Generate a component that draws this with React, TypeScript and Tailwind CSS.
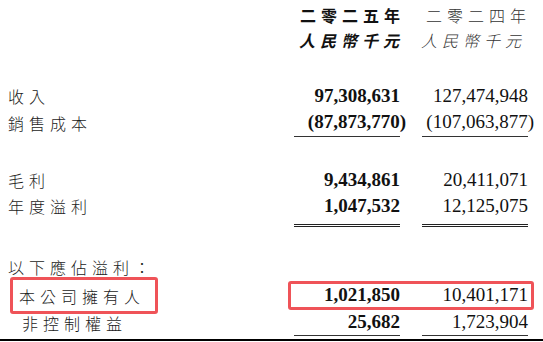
const cjk = "font-['Noto_Sans_CJK_TC','Noto_Sans_CJK_SC',sans-serif]"
const serif = "font-['Liberation_Serif','Times_New_Roman',serif]"

interface RowProps {
  label: string
  current: string
  prior: string
  indent?: string
  height?: string
  underline?: 'single' | 'double'
  highlight?: boolean
}

const Num = ({ value, bold }: { value: string; bold?: boolean }) => {
  const neg = value.startsWith('(')
  return (
    <span className={`${serif} text-[19px] text-[#111] whitespace-nowrap ${bold ? 'font-bold' : 'font-normal'} ${neg ? '-mr-[6px]' : ''}`}>
      {value}
    </span>
  )
}

const Row = ({ label, current, prior, indent = 'pl-[8px]', height = 'h-[26px]', underline, highlight }: RowProps) => {
  const line =
    underline === 'single'
      ? 'border-b border-[#333]'
      : underline === 'double'
        ? 'pb-[5px] border-b-[3px] border-double border-[#222]'
        : ''
  return (
    <div className="flex">
      <div className={`flex-1 flex items-center ${indent} ${height}`}>
        <span className={`relative ${cjk} text-[16px] font-light tracking-[5px] text-[#1a1a1a] whitespace-nowrap`}>
          {label}
          {highlight && (
            <span className="absolute -left-[9px] -right-[13px] -top-[7px] -bottom-[6px] rounded-[3px] border-[3px] border-[#ef5358]" />
          )}
        </span>
      </div>
      <div className="relative mr-[15px] flex w-[234px] gap-[22px]">
        <div className={`w-[106px] ${line}`}>
          <div className={`flex items-center justify-end ${height}`}>
            <Num value={current} bold />
          </div>
        </div>
        <div className={`w-[106px] ${line}`}>
          <div className={`flex items-center justify-end ${height}`}>
            <Num value={prior} />
          </div>
        </div>
        {highlight && (
          <div className="absolute -left-[6px] -right-[6px] top-0 bottom-0 rounded-[3px] border-[3px] border-[#ef5358]" />
        )}
      </div>
    </div>
  )
}

const Label = ({ text }: { text: string }) => (
  <div className="flex h-[26px] items-center pl-[8px]">
    <span className={`${cjk} text-[16px] font-light tracking-[5px] text-[#1a1a1a] whitespace-nowrap`}>{text}</span>
  </div>
)

export default function App() {
  return (
    <div className="w-[543px] h-[342px] overflow-hidden bg-white pt-[2px]">
      {/* Column headers */}
      <div className="flex">
        <div className="flex-1" />
        <div className={`mr-[15px] flex w-[234px] gap-[22px] ${cjk} text-[16px] tracking-[5px] whitespace-nowrap`}>
          <div className="w-[106px]">
            <div className="flex h-[25px] items-center justify-end">
              <span className="-mr-[5px] font-bold text-[#111]">二零二五年</span>
            </div>
            <div className="flex h-[25px] items-center justify-end">
              <span className="-mr-[4px] italic font-bold text-[#111]">人民幣千元</span>
            </div>
          </div>
          <div className="w-[106px]">
            <div className="flex h-[25px] items-center justify-end">
              <span className="-mr-[3px] font-light text-[#333]">二零二四年</span>
            </div>
            <div className="flex h-[25px] items-center justify-end">
              <span className="mr-[2px] italic font-light text-[#333]">人民幣千元</span>
            </div>
          </div>
        </div>
      </div>

      <div className="h-[31px]" />
      <Row label="收入" current="97,308,631" prior="127,474,948" />
      <Row label="銷售成本" current="(87,873,770)" prior="(107,063,877)" height="h-[27px]" underline="single" />

      <div className="h-[30px]" />
      <Row label="毛利" current="9,434,861" prior="20,411,071" />
      <Row label="年度溢利" current="1,047,532" prior="12,125,075" underline="double" />

      <div className="h-[27px]" />
      <Label text="以下應佔溢利：" />
      <div className="h-[1px]" />
      <Row label="本公司擁有人" current="1,021,850" prior="10,401,171" indent="pl-[19px]" height="h-[29px]" highlight />
      <Row label="非控制權益" current="25,682" prior="1,723,904" indent="pl-[22px]" height="h-[25px]" underline="single" />

      <div className="mt-[3px] h-[2px] bg-black" />
    </div>
  )
}
